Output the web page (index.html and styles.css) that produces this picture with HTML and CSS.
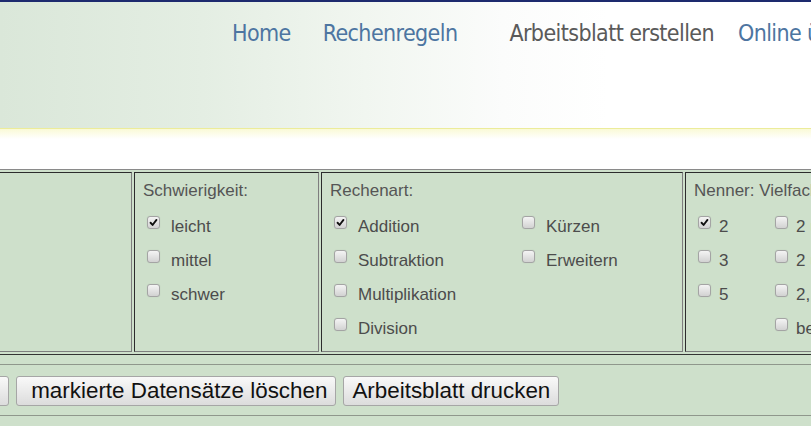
FILE: index.html
```html
<!DOCTYPE html>
<html lang="de">
<head>
<meta charset="utf-8">
<title>Arbeitsblatt erstellen</title>
<link rel="stylesheet" href="styles.css">
</head>
<body>
<header class="header">
  <nav class="nav">
    <a class="nav-link" href="#">Home</a>
    <a class="nav-link" href="#">Rechenregeln</a>
    <a class="nav-link active" href="#">Arbeitsblatt erstellen</a>
    <a class="nav-link" href="#">Online üben</a>
  </nav>
</header>
<div class="glow"></div>
<main class="form">
  <div class="options">
    <section class="cell cell-first"></section>
    <section class="cell cell-diff">
      <div class="cell-label">Schwierigkeit:</div>
      <div class="col">
        <label class="opt"><span class="box checked"><svg viewBox="0 0 13 13"><path d="M3 6.8 L5.4 9.4 L10 3.4"/></svg></span>leicht</label>
        <label class="opt"><span class="box"></span>mittel</label>
        <label class="opt"><span class="box"></span>schwer</label>
      </div>
    </section>
    <section class="cell cell-op">
      <div class="cell-label">Rechenart:</div>
      <div class="cols">
        <div class="col col-op1">
          <label class="opt"><span class="box checked"><svg viewBox="0 0 13 13"><path d="M3 6.8 L5.4 9.4 L10 3.4"/></svg></span>Addition</label>
          <label class="opt"><span class="box"></span>Subtraktion</label>
          <label class="opt"><span class="box"></span>Multiplikation</label>
          <label class="opt"><span class="box"></span>Division</label>
        </div>
        <div class="col">
          <label class="opt"><span class="box"></span>Kürzen</label>
          <label class="opt"><span class="box"></span>Erweitern</label>
        </div>
      </div>
    </section>
    <section class="cell cell-den">
      <div class="cell-label">Nenner: Vielfache von</div>
      <div class="cols">
        <div class="col col-den1">
          <label class="opt"><span class="box tight checked"><svg viewBox="0 0 13 13"><path d="M3 6.8 L5.4 9.4 L10 3.4"/></svg></span>2</label>
          <label class="opt"><span class="box tight"></span>3</label>
          <label class="opt"><span class="box tight"></span>5</label>
        </div>
        <div class="col">
          <label class="opt"><span class="box tight"></span>2 und 3</label>
          <label class="opt"><span class="box tight"></span>2 und 5</label>
          <label class="opt"><span class="box tight"></span>2, 3 und 5</label>
          <label class="opt"><span class="box tight"></span>beliebig</label>
        </div>
      </div>
    </section>
  </div>
  <div class="actions">
    <button class="btn btn-cut" type="button">Liste</button>
    <button class="btn" type="button">&nbsp;markierte Datensätze löschen</button>
    <button class="btn" type="button">Arbeitsblatt drucken</button>
  </div>
</main>
</body>
</html>
```
FILE: styles.css
```css
html {
  overflow: hidden;
}

body {
  margin: 0;
  background: #ffffff;
  font-family: "Liberation Sans", Arial, sans-serif;
}

.header {
  border-top: 2px solid #1d2a6e;
  height: 126px;
  border-bottom: 1px solid #ecec9a;
  background: linear-gradient(90deg, #dae7d9 0%, #e4eee3 25%, #f1f6f0 45%, #fbfcfb 62%, #ffffff 75%);
}

.nav {
  display: flex;
  padding: 18px 0 0 216px;
  white-space: nowrap;
}

.nav-link {
  font-family: "DejaVu Sans Condensed", "DejaVu Sans", sans-serif;
  font-stretch: condensed;
  font-size: 23px;
  letter-spacing: -0.6px;
  line-height: 27px;
  color: #4d75a1;
  text-decoration: none;
  padding: 0 16px;
}

.nav-link.active {
  color: #5a5a5a;
  padding: 0 8px 0 36px;
}

.glow {
  height: 10px;
  background: linear-gradient(#fafad6, #ffffff);
}

.form {
  margin: 30px 0 0 -72px;
  background: #cee0cb;
  padding-bottom: 20px;
}

.options {
  display: flex;
  gap: 2px;
  padding: 2px;
  border-top: 1px solid #8a8a8a;
  border-bottom: 1px solid #333333;
}

.cell {
  flex: none;
  box-sizing: border-box;
  border: 1px solid #7e7e7e;
  border-top-color: #2c2c2c;
  border-left-color: #2c2c2c;
  padding: 8px 8px 5px;
  font-size: 17px;
  color: #4c4c4c;
}

.cell-first { width: 202px; }
.cell-diff { width: 185px; }
.cell-op { width: 362px; }
.cell-den { width: 260px; }

.cell-label {
  line-height: 20px;
  margin-bottom: 9px;
  white-space: nowrap;
  color: #555555;
}

.cols {
  display: flex;
}

.col {
  display: flex;
  flex-direction: column;
}

.col-op1 { width: 188px; }
.col-den1 { width: 77px; }

.opt {
  display: block;
  height: 34px;
  line-height: 34px;
  white-space: nowrap;
}

.box {
  display: inline-block;
  box-sizing: border-box;
  width: 13px;
  height: 13px;
  margin: 0 11px 3px 4px;
  vertical-align: baseline;
  overflow: hidden;
  border: 1px solid #a4a4a4;
  border-radius: 3px;
  background: linear-gradient(#f4f4f4, #d2d2d2);
  box-shadow: 0 0 1px rgba(0, 0, 0, 0.15);
}

.box.tight {
  margin-right: 8px;
}

.box svg {
  display: block;
  width: 11px;
  height: 11px;
  margin: 0;
}

.box path {
  fill: none;
  stroke: #111111;
  stroke-width: 2.2;
  stroke-linecap: round;
  stroke-linejoin: round;
}

.actions {
  display: flex;
  gap: 7px;
  margin-top: 9px;
  padding: 11px 0 9px;
  border-top: 1px solid #8f978c;
  border-bottom: 1px solid #8f978c;
}

.btn {
  flex: none;
  height: 30px;
  padding: 0 8px;
  border: 1px solid #a6a6a6;
  border-radius: 3px;
  background: linear-gradient(#f9f9f9, #dcdcdc);
  font-family: "Liberation Sans", Arial, sans-serif;
  font-size: 22.4px;
  line-height: 28px;
  color: #111111;
  white-space: nowrap;
}

.btn-cut {
  width: 81px;
  padding: 0 8px 0 4px;
  overflow: hidden;
  text-align: right;
  color: #333333;
}
```
